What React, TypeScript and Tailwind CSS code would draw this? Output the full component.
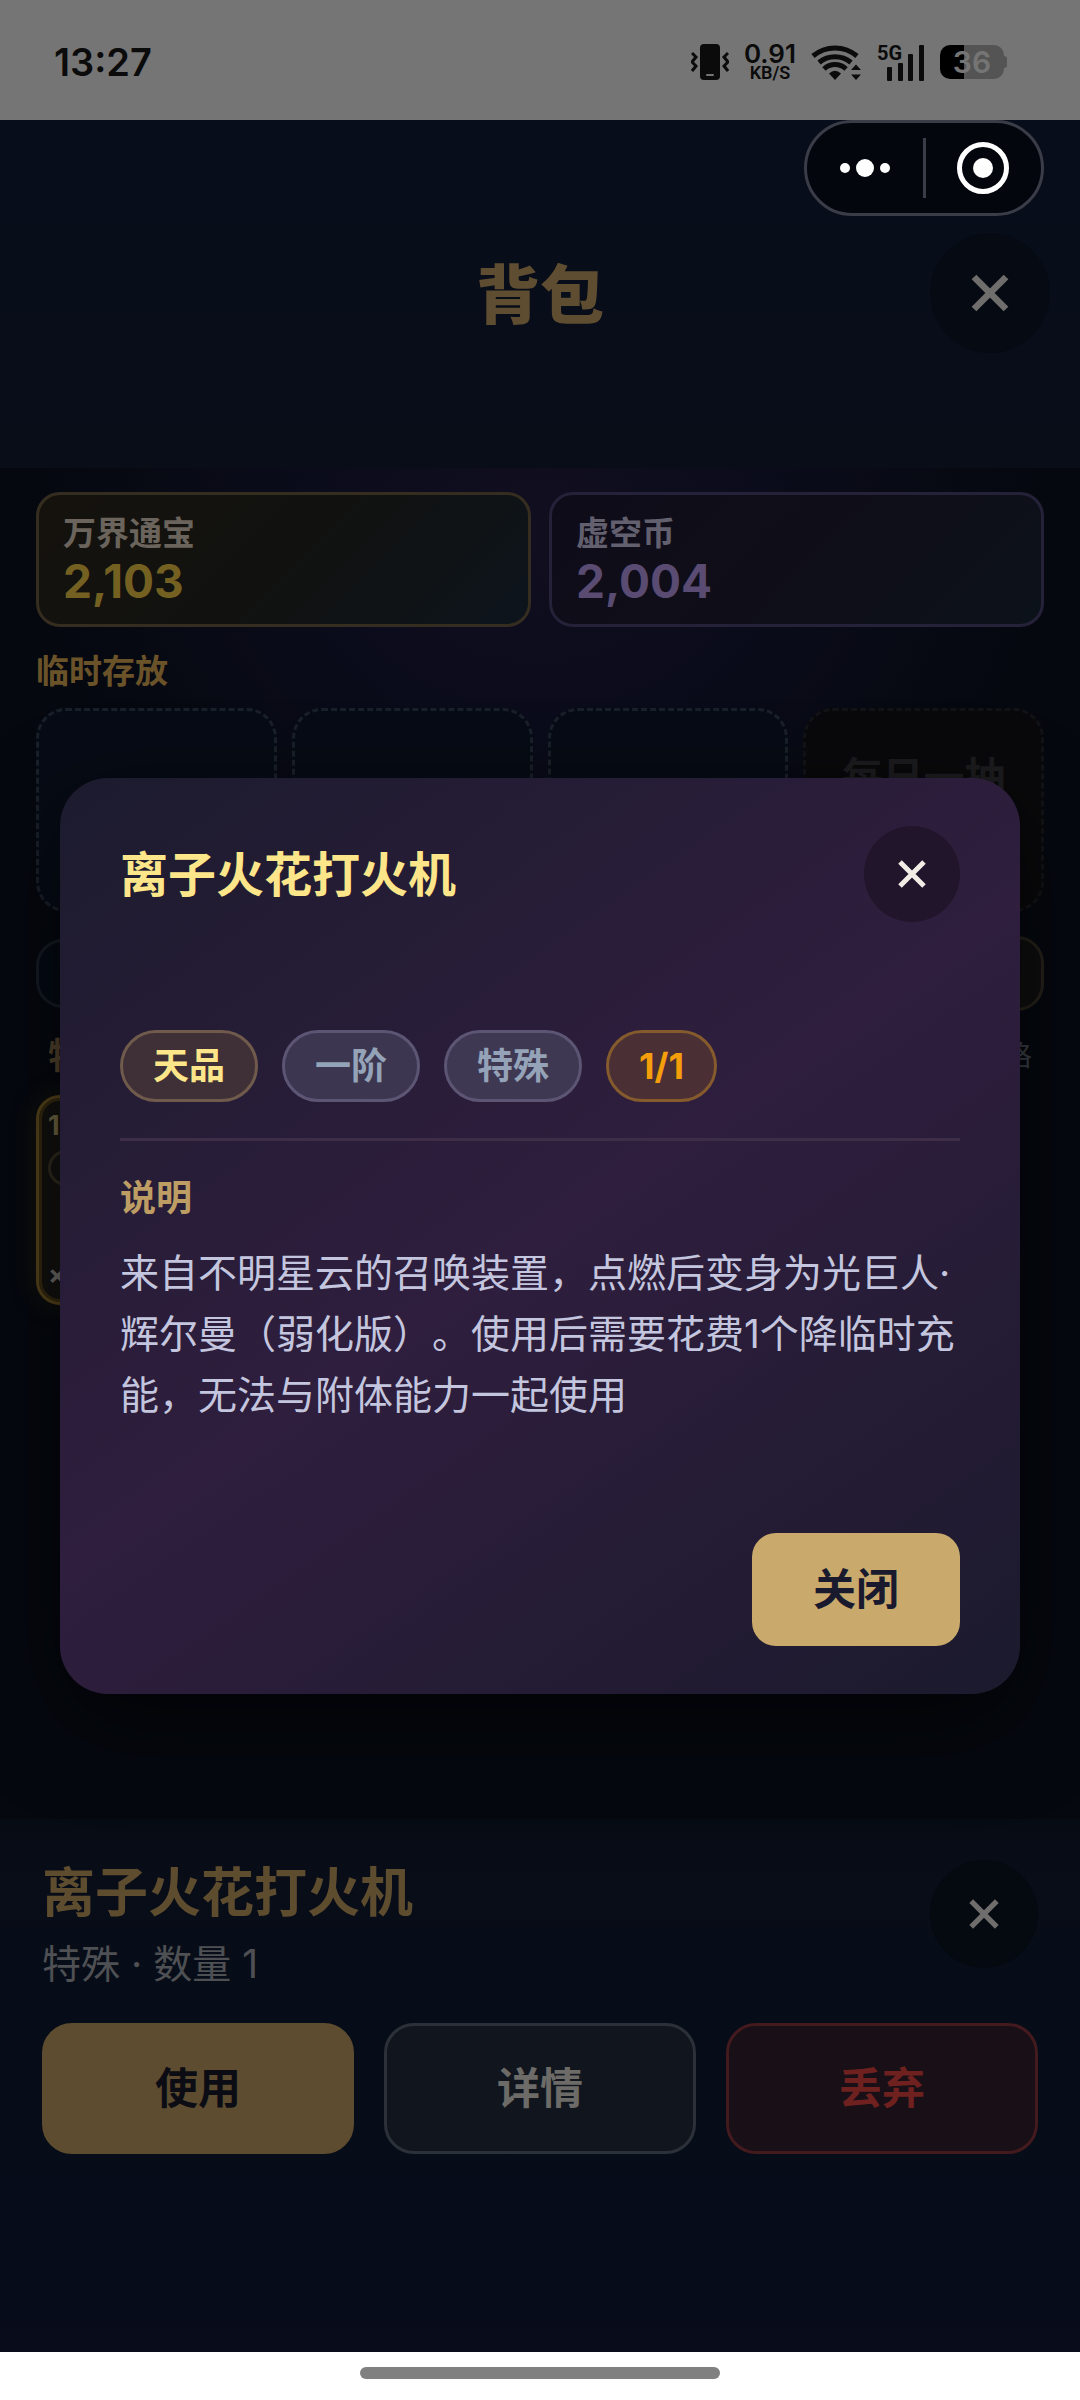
import clsx from "clsx";

const CHIPS = [
  { label: "天品", tone: "border-[#6f5a4c] bg-[#3e3036] text-[#fde68a]" },
  { label: "一阶", tone: "border-[#5c5674] bg-[#3c3650] text-[#94a3b8]" },
  { label: "特殊", tone: "border-[#5c5674] bg-[#3f3853] text-[#94a3b8]" },
  { label: "1/1", tone: "border-[#855a2d] bg-[#4a3034] text-[#f59e0b]" },
];

const CURRENCIES = [
  {
    label: "万界通宝",
    amount: "2,103",
    card: "border-[#352d20] bg-[linear-gradient(135deg,#15120d,#111210_50%,#0d141c)]",
    labelTone: "text-[#6b645c]",
    amountTone: "text-[#746122]",
  },
  {
    label: "虚空币",
    amount: "2,004",
    card: "border-[#242138] bg-[linear-gradient(135deg,#0f0c19,#0f0e18_50%,#0c121a)]",
    labelTone: "text-[#625f6e]",
    amountTone: "text-[#594b72]",
  },
];

const ACTIONS = [
  { label: "使用", tone: "border-[#5d4c2f] bg-[#5d4c2f] text-[#0c0c15]" },
  { label: "详情", tone: "border-[#2c3038] bg-[#11151e] text-[#6c6b68]" },
  { label: "丢弃", tone: "border-[#431a1d] bg-[#180f17] text-[#6e211f]" },
];

function Cross({ className }: { className: string }) {
  return (
    <svg viewBox="0 0 30 30" className={className} aria-hidden="true">
      <path d="M3 3 27 27M27 3 3 27" stroke="currentColor" strokeWidth="5" fill="none" />
    </svg>
  );
}

function StatusBar() {
  return (
    <div className="flex h-[120px] items-center justify-between bg-[#757575] pt-1 pr-[73px] pl-[54px] text-[#0b0b0b]">
      <span className="text-[38px] leading-[44px] font-semibold">13:27</span>
      <div className="flex items-center gap-[15px]">
        <svg width="38" height="36" viewBox="0 0 38 36" aria-hidden="true">
          <rect x="9" y="0" width="20" height="36" rx="4" fill="currentColor" />
          <rect x="15" y="30" width="8" height="2" rx="1" fill="#757575" />
          <path
            d="M1 9 5 13 1 18 5 22 1 27M37 9 33 13 37 18 33 22 37 27"
            fill="none"
            stroke="currentColor"
            strokeWidth="3"
          />
        </svg>
        <div className="flex flex-col items-center font-semibold">
          <span className="text-[26px] leading-[22px]">0.91</span>
          <span className="font-['Roboto'] text-[18px] leading-4">KB/S</span>
        </div>
        <svg width="51" height="36" viewBox="0 0 51 36" aria-hidden="true">
          <g fill="none" stroke="currentColor" strokeWidth="5">
            <path d="M2 12A34 34 0 0 1 46 12" />
            <path d="M8 18.500A25 25 0 0 1 40 18.500" />
            <path d="M13 25A16 16 0 0 1 35 25" />
          </g>
          <path d="M18 29.500Q24 24 30 29.500L24 36Z" fill="currentColor" />
          <path d="M45 20.500 50 26H40ZM45 36 50 30.500H40Z" fill="currentColor" />
        </svg>
        <svg
          width="48"
          height="37"
          viewBox="0 0 48 37"
          fill="currentColor"
          className="overflow-visible"
          aria-hidden="true"
        >
          <text x="0" y="16" className="font-['Roboto'] text-[20px] font-bold">
            5G
          </text>
          <rect x="10" y="23" width="5" height="14" rx="1" />
          <rect x="21" y="19" width="5" height="18" rx="1" />
          <rect x="31" y="10" width="5" height="27" rx="1" />
          <rect x="42" y="1" width="5" height="36" rx="1" />
        </svg>
        <div className="flex items-center">
          <span className="flex h-[34px] w-16 items-center justify-center rounded-[10px] bg-[linear-gradient(90deg,#000_38%,#545454_38%)] text-[30px] leading-none font-semibold text-[#757575]">
            36
          </span>
          <span className="h-3 w-[3px] rounded-r bg-[#545454]" />
        </div>
      </div>
    </div>
  );
}

function Capsule() {
  return (
    <div className="flex h-24 w-60 items-center rounded-full border-[3px] border-[#3a3c47] bg-[#04060e] text-white">
      <button type="button" aria-label="更多" className="flex flex-1 justify-center">
        <svg width="50" height="18" viewBox="0 0 50 18" fill="currentColor" aria-hidden="true">
          <circle cx="5" cy="9" r="5" />
          <circle cx="25" cy="9" r="9" />
          <circle cx="45" cy="9" r="5" />
        </svg>
      </button>
      <span className="h-[60px] w-[3px] bg-[#3a3c47]" />
      <button type="button" aria-label="退出" className="flex flex-1 justify-center">
        <svg width="52" height="52" viewBox="0 0 52 52" aria-hidden="true">
          <circle cx="26" cy="26" r="23.500" fill="none" stroke="currentColor" strokeWidth="5" />
          <circle cx="26" cy="26" r="10" fill="currentColor" />
        </svg>
      </button>
    </div>
  );
}

function Header() {
  return (
    <header className="flex h-[348px] flex-col bg-[linear-gradient(180deg,#080d1b,#080d18)]">
      <div className="flex justify-end pr-9">
        <Capsule />
      </div>
      <div className="mt-[17px] grid grid-cols-[1fr_auto_1fr] items-center px-[30px]">
        <span />
        <h1 className="pt-1 text-[64px] leading-[72px] font-black text-[#5e4d30]">背包</h1>
        <button
          type="button"
          aria-label="关闭背包"
          className="flex size-[120px] items-center justify-center justify-self-end rounded-full bg-[#050a13] text-[#6f6e6c]"
        >
          <Cross className="size-10" />
        </button>
      </div>
    </header>
  );
}

function Inventory() {
  return (
    <main className="flex-1 bg-[#05080f] bg-[radial-gradient(ellipse_500px_420px_at_50%_60px,#110e20,#0b0c1b_45%,#05080f00)] px-9 pt-6">
      <div className="grid grid-cols-2 gap-[18px]">
        {CURRENCIES.map((c) => (
          <div
            key={c.label}
            className={clsx("rounded-3xl border-[3px] px-6 pt-[17px] pb-[18px]", c.card)}
          >
            <p className={clsx("text-[33px] leading-[42px] font-bold", c.labelTone)}>{c.label}</p>
            <p className={clsx("pt-[2px] text-[46px] leading-[50px] font-bold", c.amountTone)}>
              {c.amount}
            </p>
          </div>
        ))}
      </div>

      <h2 className="mt-[22px] text-[33px] leading-[44px] font-bold text-[#6b5329]">临时存放</h2>
      <div className="mt-[15px] grid grid-cols-4 gap-[15px]">
        {[0, 1, 2].map((i) => (
          <div
            key={i}
            className="h-[204px] rounded-[30px] border-[3px] border-dashed border-[#1a2029] bg-[#060b15]"
          />
        ))}
        <button
          type="button"
          className="flex h-[204px] items-start justify-center rounded-[30px] border-[3px] border-dashed border-[#121317] bg-[#09090b] pt-[42px] text-[41px] leading-[48px] font-bold text-[#1c1c1f]"
        >
          每日一抽
        </button>
      </div>

      <div className="mt-6 flex items-center justify-between">
        <div className="h-[69px] w-60 rounded-[27px] border-[3px] border-[#151b24] bg-[#050a13]" />
        <div className="h-[75px] w-60 rounded-[27px] border-[3px] border-[#26211a] bg-[#0f0e0f]" />
      </div>

      <div className="mt-[21px] flex items-center justify-between px-3">
        <span className="text-[36px] leading-[48px] font-bold text-[#51422a]">特殊</span>
        <span className="text-[28px] leading-[48px] text-[#3b3e45]">格</span>
      </div>
      <div className="mt-[15px] flex h-[210px] w-60 flex-col items-start rounded-3xl border-[3px] border-[#54431a] bg-[#121110] px-[9px] pt-[12px] pb-[9px] shadow-[0_0_24px_#3a2f1066,inset_0_0_0_3px_#33270f]">
        <span className="text-[27px] leading-8 font-bold text-[#6f6541]">1</span>
        <span className="mt-2 size-9 rounded-full border-[3px] border-[#2f2a1f]" />
        <span className="mt-auto text-[27px] leading-8 font-bold text-[#6b6a66]">×1</span>
      </div>
    </main>
  );
}

function ActionSheet() {
  return (
    <section className="bg-[linear-gradient(180deg,#060b14,#080d18_12%,#060d18_55%,#080c1b)] px-[42px] pt-[39px] pb-[198px]">
      <div className="flex items-start justify-between">
        <div className="pt-[3px]">
          <h2 className="text-[53px] leading-[64px] font-bold text-[#5e4c2f]">离子火花打火机</h2>
          <p className="mt-3 text-[39px] leading-[54px] text-[#4e5054]">特殊 · 数量 1</p>
        </div>
        <button
          type="button"
          aria-label="取消选择"
          className="mt-[2px] flex size-[108px] items-center justify-center rounded-full bg-[#050910] text-[#6f6e6c]"
        >
          <Cross className="size-8" />
        </button>
      </div>
      <div className="mt-8 grid grid-cols-3 gap-[30px]">
        {ACTIONS.map((action) => (
          <button
            key={action.label}
            type="button"
            className={clsx(
              "h-[131px] rounded-[30px] border-[3px] text-[43px] leading-none font-bold",
              action.tone,
            )}
          >
            {action.label}
          </button>
        ))}
      </div>
    </section>
  );
}

function ItemDialog() {
  return (
    <div
      role="dialog"
      aria-labelledby="item-title"
      className="w-full rounded-[48px] bg-[linear-gradient(145deg,#1c1b2e,#2f1e3e_50%,#1b1a2d)] px-[60px] py-12 shadow-[0_30px_90px_#00000099]"
    >
      <div className="flex items-center justify-between">
        <h2 id="item-title" className="pt-[2px] text-[48px] leading-[60px] font-bold text-[#fde68a]">
          离子火花打火机
        </h2>
        <button
          type="button"
          aria-label="关闭"
          className="flex size-24 items-center justify-center rounded-full bg-[#20152a] text-[#f1ede6]"
        >
          <Cross className="size-[30px]" />
        </button>
      </div>

      <div className="mt-[108px] flex gap-6 border-b-[3px] border-[#3d2d47] pb-9">
        {CHIPS.map((chip) => (
          <span
            key={chip.label}
            className={clsx(
              "flex h-[72px] items-center rounded-full border-[3px] px-[30px] text-[36px] leading-none font-bold",
              chip.tone,
            )}
          >
            {chip.label}
          </span>
        ))}
      </div>

      <h3 className="mt-[33px] text-[36px] leading-[48px] font-bold text-[#bd9d64]">说明</h3>
      <p className="mt-5 text-[39px] leading-[61px] text-[#c3c6de] [text-spacing-trim:space-all]">
        来自不明星云的召唤装置，点燃后变身为光巨人·辉尔曼（弱化版）。使用后需要花费1个降临时充能，无法与附体能力一起使用
      </p>

      <div className="mt-[108px] flex justify-end">
        <button
          type="button"
          className="h-[113px] rounded-3xl bg-[#c9a96c] px-[61px] text-[43px] leading-none font-bold text-[#1a1a2e]"
        >
          关闭
        </button>
      </div>
    </div>
  );
}

export default function App() {
  return (
    <div className="flex min-h-screen flex-col bg-white font-['Inter','Noto_Sans_CJK_SC',sans-serif]">
      <StatusBar />
      <div className="relative flex flex-1 flex-col">
        <Header />
        <Inventory />
        <ActionSheet />
        <div className="absolute inset-0 flex items-center justify-center px-[60px]">
          <ItemDialog />
        </div>
      </div>
      <div className="flex h-12 items-start justify-center pt-[15px]">
        <span className="h-3 w-1/3 rounded-full bg-[#808080]" />
      </div>
    </div>
  );
}
